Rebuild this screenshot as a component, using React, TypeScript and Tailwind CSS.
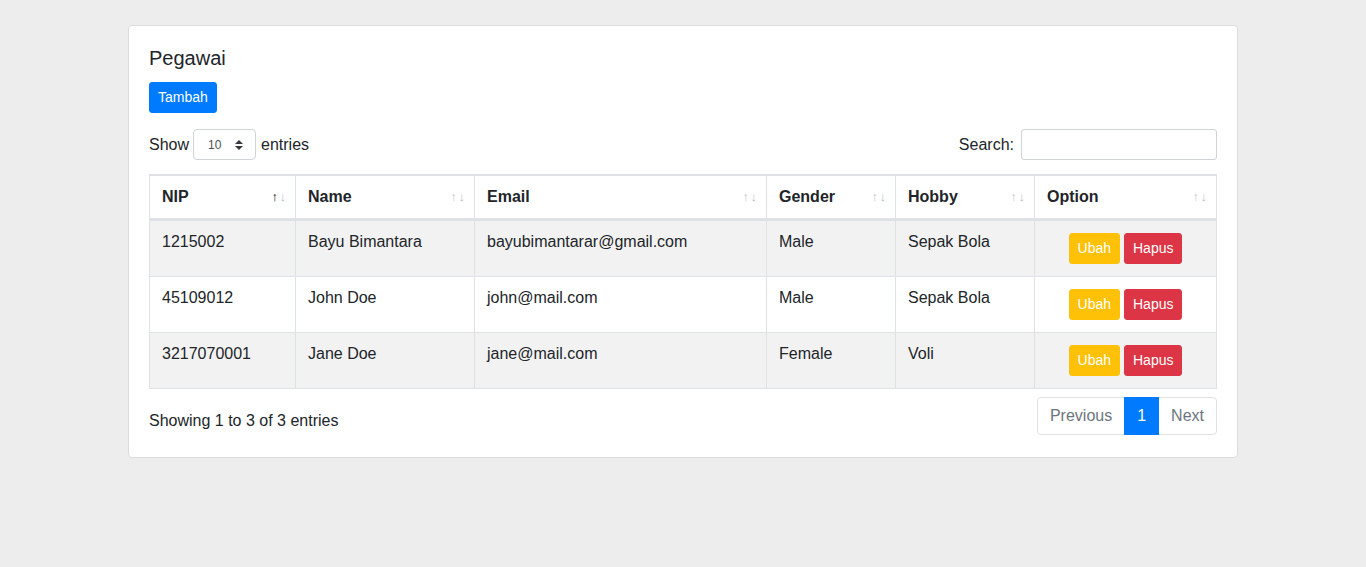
import React from 'react';

interface IPegawai {
    nip: string;
    name: string;
    email: string;
    gender: string;
    hobby: string;
}

const rows: IPegawai[] = [
    {nip: '1215002', name: 'Bayu Bimantara', email: 'bayubimantarar@gmail.com', gender: 'Male', hobby: 'Sepak Bola'},
    {nip: '45109012', name: 'John Doe', email: 'john@mail.com', gender: 'Male', hobby: 'Sepak Bola'},
    {nip: '3217070001', name: 'Jane Doe', email: 'jane@mail.com', gender: 'Female', hobby: 'Voli'},
];

const columns = [
    {label: 'NIP', width: 'w-[146px]', active: true},
    {label: 'Name', width: 'w-[179px]', active: false},
    {label: 'Email', width: 'w-[292px]', active: false},
    {label: 'Gender', width: 'w-[129px]', active: false},
    {label: 'Hobby', width: 'w-[139px]', active: false},
    {label: 'Option', width: 'w-[181px]', active: false},
];

const SortIcons: React.FC<{ active: boolean }> = ({active}) => (
    <>
        <span className={active
            ? 'absolute right-[17px] top-[13px] text-[13px] leading-4 font-normal text-black'
            : 'absolute right-[17px] top-[13px] text-[13px] leading-4 font-normal text-[#212529] opacity-30'}>↑</span>
        <span className="absolute right-[9px] top-[13px] text-[13px] leading-4 font-normal text-[#212529] opacity-30">↓</span>
    </>
);

const App: React.FC = () => {
    return (
        <div className="min-h-screen bg-[#ededed] pt-[25px] font-['Liberation_Sans',Arial,sans-serif] text-[16px] text-[#212529]">
            <div className="mx-auto w-[1110px] rounded border border-[#dcdcdc] bg-white p-5">
                <h5 className="mb-3 text-[20px] leading-6">Pegawai</h5>
                <button className="rounded-[3px] border border-[#007bff] bg-[#007bff] px-2 py-1 text-[14px] leading-[21px] text-white">
                    Tambah
                </button>

                <div className="mt-4 flex items-center justify-between">
                    <div className="flex items-center">
                        <span>Show</span>
                        <div className="relative ml-1 mr-[5px] flex h-[31px] w-[63px] items-center rounded border border-[#ced4da] pl-[14px] text-[12px] text-[#495057]">
                            10
                            <svg className="absolute right-3 top-[10px]" width="8" height="10" viewBox="0 0 4 5">
                                <path fill="#343a40" d="M2 0L0 2h4zm0 5L0 3h4z"/>
                            </svg>
                        </div>
                        <span>entries</span>
                    </div>
                    <div className="flex items-center">
                        <span>Search:</span>
                        <input className="ml-[7px] h-[31px] w-[196px] rounded-[3px] border border-[#ced4da] px-2 text-[14px] outline-none"/>
                    </div>
                </div>

                <table className="mt-[14px] w-full table-fixed border-separate border-spacing-0 border border-[#dee2e6]">
                    <thead>
                    <tr>
                        {columns.map((col, index) => (
                            <th key={col.label}
                                className={index === columns.length - 1
                                    ? `${col.width} relative border-t border-b-2 border-[#dee2e6] py-3 pl-3 pr-[30px] text-left font-bold leading-[18px]`
                                    : `${col.width} relative border-t border-r border-b-2 border-[#dee2e6] py-3 pl-3 pr-[30px] text-left font-bold leading-[18px]`}>
                                {col.label}
                                <SortIcons active={col.active}/>
                            </th>
                        ))}
                    </tr>
                    </thead>
                    <tbody>
                    {rows.map((row, index) => (
                        <tr key={row.nip} className={index % 2 === 0 ? 'bg-[#f2f2f2]' : 'bg-white'}>
                            <td className="h-[56px] border-t border-r border-[#dee2e6] px-3 pt-[13px] align-top leading-4">{row.nip}</td>
                            <td className="border-t border-r border-[#dee2e6] px-3 pt-[13px] align-top leading-4">{row.name}</td>
                            <td className="border-t border-r border-[#dee2e6] px-3 pt-[13px] align-top leading-4">{row.email}</td>
                            <td className="border-t border-r border-[#dee2e6] px-3 pt-[13px] align-top leading-4">{row.gender}</td>
                            <td className="border-t border-r border-[#dee2e6] px-3 pt-[13px] align-top leading-4">{row.hobby}</td>
                            <td className="border-t border-[#dee2e6] px-3 py-3 align-top">
                                <div className="flex justify-center gap-1">
                                    <button className="rounded-[3px] border border-[#ffc107] bg-[#ffc107] px-2 py-1 text-[14px] leading-[21px] text-white">Ubah</button>
                                    <button className="rounded-[3px] border border-[#dc3545] bg-[#dc3545] px-2 py-1 text-[14px] leading-[21px] text-white">Hapus</button>
                                </div>
                            </td>
                        </tr>
                    ))}
                    </tbody>
                </table>

                <div className="mt-[6px] flex items-start justify-between">
                    <div className="pt-[14px] leading-6">Showing 1 to 3 of 3 entries</div>
                    <ul className="my-[2px] flex leading-5">
                        <li className="rounded-l border border-[#dee2e6] px-3 py-2 text-[#6c757d]">Previous</li>
                        <li className="relative -ml-px border border-[#007bff] bg-[#007bff] px-3 py-2 text-white">1</li>
                        <li className="-ml-px rounded-r border border-[#dee2e6] px-3 py-2 text-[#6c757d]">Next</li>
                    </ul>
                </div>
            </div>
        </div>
    );
};

export default App;
